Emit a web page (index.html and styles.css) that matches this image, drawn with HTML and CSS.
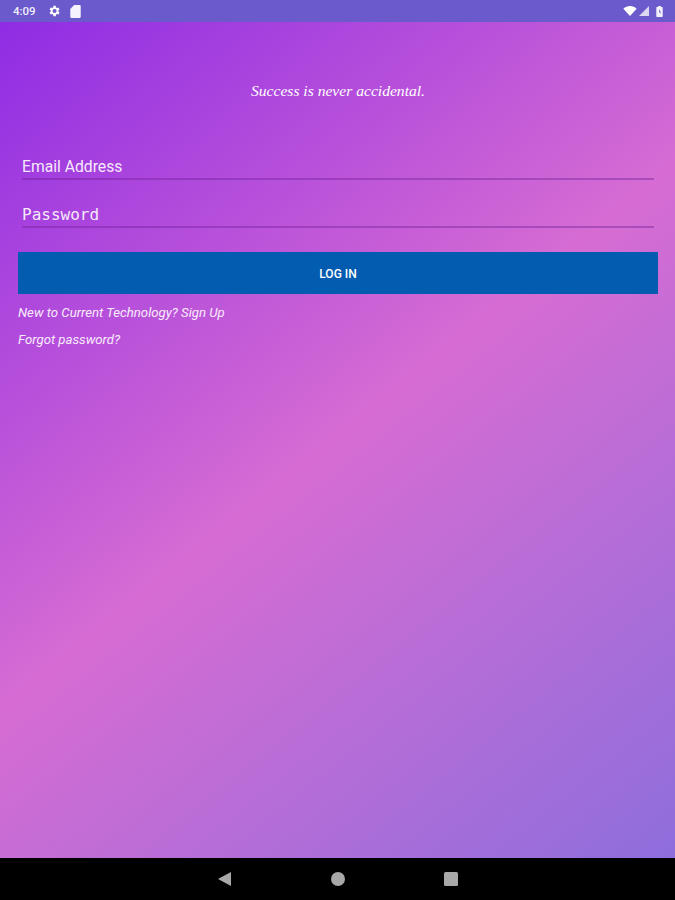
FILE: index.html
```html
<!DOCTYPE html>
<html lang="en">
<head>
<meta charset="utf-8">
<title>Log in</title>
<link rel="stylesheet" href="styles.css">
</head>
<body>
<div class="screen">
  <header class="status">
    <span class="time">4:09</span>
    <svg class="ic-gear" viewBox="0 0 24 24"><path d="M19.400 13a7.500 7.500 0 0 0 0-2l2.100-1.600-2-3.500-2.500 1a7.500 7.500 0 0 0-1.700-1L15 3.200h-4l-.4 2.700a7.500 7.500 0 0 0-1.700 1l-2.500-1-2 3.500L6.500 11a7.500 7.500 0 0 0 0 2l-2.100 1.600 2 3.500 2.500-1a7.500 7.500 0 0 0 1.700 1l.4 2.700h4l.4-2.700a7.500 7.500 0 0 0 1.700-1l2.500 1 2-3.500zM13 15.500a3.500 3.500 0 1 1 0-7 3.500 3.500 0 0 1 0 7z" fill-rule="evenodd"/></svg>
    <svg class="ic-sd" viewBox="0 0 12 14"><path d="M4.500 0H10.500a1.200 1.200 0 0 1 1.200 1.200v11.600a1.200 1.200 0 0 1-1.200 1.200H1.500a1.200 1.200 0 0 1-1.200-1.200V4.200z"/></svg>
    <span class="status-gap"></span>
    <svg class="ic-wifi" viewBox="0 0 16 12"><path d="M0 3.200C4.500-1 11.500-1 16 3.200L8 12z"/></svg>
    <svg class="ic-signal" viewBox="0 0 11 11"><path d="M11 0v11H0z"/></svg>
    <svg class="ic-batt" viewBox="0 0 7 12"><path fill-rule="evenodd" d="M2 0h3v1h1.300a.7.700 0 0 1 .7.700v9.600a.7.700 0 0 1-.7.700H.7a.7.700 0 0 1-.7-.700V1.700A.7.700 0 0 1 .7 1H2zM3 4v3h1.200v2L5 6H3.800V4z"/></svg>
  </header>
  <main class="content">
    <p class="motto">Success is never accidental.</p>
    <form class="form">
      <label class="field"><span class="ph">Email Address</span></label>
      <label class="field field-pass"><span class="ph mono">Password</span></label>
      <button class="login" type="button">LOG IN</button>
    </form>
    <a class="link link-first">New to Current Technology? Sign Up</a>
    <a class="link link-second">Forgot password?</a>
  </main>
  <footer class="nav">
    <svg class="nav-ic" viewBox="0 0 14 14"><path d="M13 0v14L0 7z"/></svg>
    <svg class="nav-ic" viewBox="0 0 14 14"><circle cx="7" cy="7" r="7"/></svg>
    <svg class="nav-ic" viewBox="0 0 14 14"><rect width="14" height="14" rx="1.500"/></svg>
  </footer>
</div>
</body>
</html>
```
FILE: styles.css
```css
* { box-sizing: border-box; }
html, body { margin: 0; padding: 0; }
.screen {
  width: 675px; height: 900px; display: flex; flex-direction: column; overflow: hidden;
  font-family: "Roboto", "Liberation Sans", sans-serif; color: #fff;
  background: #000;
}
.status {
  height: 22px; flex: none; background: #6b5acb; display: flex; align-items: center;
  padding: 0 12px 0 13px;
}
.time { font-size: 11.500px; font-weight: 500; color: #f1eefb; width: 34px; }
.ic-gear { width: 14px; height: 14px; fill: #fff; margin-right: 9px; }
.ic-sd { width: 11px; height: 13px; fill: #f6f3fc; }
.status-gap { flex: 1; }
.ic-wifi { width: 14px; height: 10px; fill: #fff; margin-right: 2px; }
.ic-signal { width: 10px; height: 10px; fill: #dcd6f2; margin-right: 7px; }
.ic-batt { width: 7px; height: 11px; fill: #f3f0fb; }
.content {
  flex: 1; padding: 0 17px 0 18px;
  background: linear-gradient(141deg, #8f2ce4 0%, #d66cd3 50%, #8e6edc 100%);
}
.motto {
  margin: 59px 0 0; height: 20px; line-height: 20px; text-align: center;
  font-family: "Liberation Serif", serif; font-style: italic; font-size: 15.600px;
  color: #fff;
}
.form { margin-top: 55px; display: flex; flex-direction: column; }
.field {
  display: flex; align-items: center; height: 24px; margin: 0 4px 0 4px;
  border-bottom: 2px solid rgba(110, 30, 150, .4);
}
.field-pass { margin-top: 24px; }
.ph { font-size: 15.700px; color: #f6e9fb; line-height: 22px; }
.mono { font-family: "DejaVu Sans Mono", monospace; font-size: 16px; }
.login {
  margin-top: 24px; height: 42px; border: 0; padding: 1px 0 0; background: #045cb0; color: #fff;
  font: 500 12px "Roboto", sans-serif;
}
.link { display: block; font-style: italic; font-size: 13.200px; line-height: 16px; color: #f8ecfb; }
.link-first { margin-top: 11px; }
.link-second { margin-top: 11px; }
.nav {
  height: 42px; flex: none; background: #000; display: flex; align-items: center;
  justify-content: center; gap: 99px;
}
.nav-ic { width: 14px; height: 14px; fill: #a8a8a8; }
```
